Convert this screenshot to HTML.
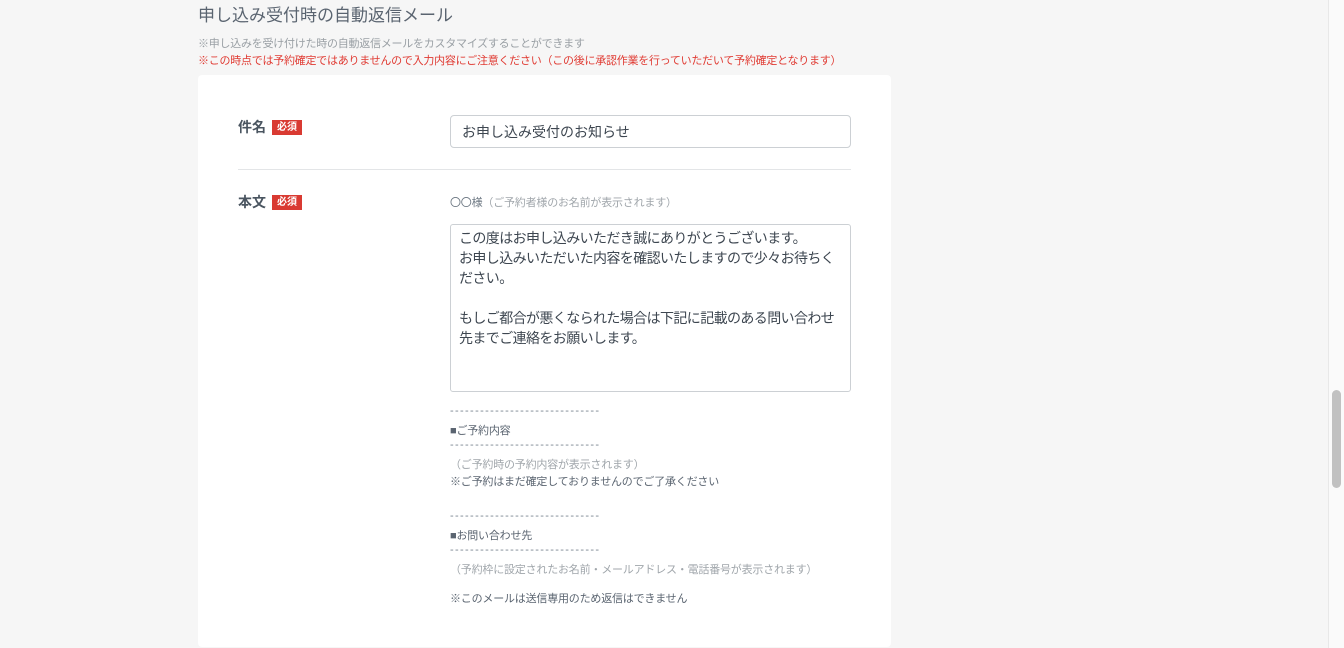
<!DOCTYPE html>
<html><head><meta charset="utf-8"><style>
*{margin:0;padding:0;box-sizing:border-box}
body{width:1344px;height:648px;background:#f6f6f6;font-family:"Liberation Sans","Noto Sans CJK JP",sans-serif;position:relative;overflow:hidden;color:#4a5560}
.a{position:absolute;white-space:nowrap}
.card{position:absolute;left:198px;top:75px;width:693px;height:572px;background:#fff;border-radius:4px}
.req{display:inline-block;background:#d93a32;color:#fff;font-size:10px;line-height:15px;padding:0 5px;margin-left:6px;vertical-align:2px;font-weight:bold}
.lbl{font-size:14px;font-weight:bold;color:#4a5560}
.s{font-size:11px;color:#5a6470;letter-spacing:-0.2px}
.d{letter-spacing:1.35px;color:#7a8590}
.g{color:#a0a6ab}
</style></head><body>
<div class="a" style="left:198px;top:1px;font-size:17px;color:#5a6470">申し込み受付時の自動返信メール</div>
<div class="a" style="left:198px;top:35px;font-size:11px;color:#9aa0a5;letter-spacing:-0.25px">※申し込みを受け付けた時の自動返信メールをカスタマイズすることができます</div>
<div class="a" style="left:198px;top:52px;font-size:11px;color:#e03a32;letter-spacing:-0.25px">※この時点では予約確定ではありませんので入力内容にご注意ください（この後に承認作業を行っていただいて予約確定となります）</div>
<div class="card"></div>
<div class="a lbl" style="left:238px;top:117px">件名<span class="req">必須</span></div>
<div class="a" style="left:450px;top:115px;width:401px;height:33px;border:1px solid #ccd0d4;border-radius:4px;padding:6px 11px;font-size:14px;color:#3d4650">お申し込み受付のお知らせ</div>
<div class="a" style="left:238px;top:169px;width:613px;height:1px;background:#e3e5e7"></div>
<div class="a lbl" style="left:238px;top:192px">本文<span class="req">必須</span></div>
<div class="a s" style="left:450px;top:194px"><span style="color:#6a7580">〇〇様</span><span class="g">（ご予約者様のお名前が表示されます）</span></div>
<div class="a" style="left:450px;top:224px;width:401px;height:168px;border:1px solid #ccd0d4;border-radius:3px;padding:3px 8px;font-size:14px;line-height:20px;color:#3d4650;letter-spacing:-0.6px;overflow:hidden">この度はお申し込みいただき誠にありがとうございます。<br>お申し込みいただいた内容を確認いたしますので少々お待ちく<br>ださい。<br><br>もしご都合が悪くなられた場合は下記に記載のある問い合わせ<br>先までご連絡をお願いします。</div>
<div class="a s d" style="left:450px;top:405px">------------------------------</div>
<div class="a s" style="left:450px;top:422px">■ご予約内容</div>
<div class="a s d" style="left:450px;top:439px">------------------------------</div>
<div class="a s g" style="left:450px;top:456px">（ご予約時の予約内容が表示されます）</div>
<div class="a s" style="left:450px;top:473px">※ご予約はまだ確定しておりませんのでご了承ください</div>
<div class="a s d" style="left:450px;top:510px">------------------------------</div>
<div class="a s" style="left:450px;top:527px">■お問い合わせ先</div>
<div class="a s d" style="left:450px;top:544px">------------------------------</div>
<div class="a s g" style="left:450px;top:561px">（予約枠に設定されたお名前・メールアドレス・電話番号が表示されます）</div>
<div class="a s" style="left:450px;top:590px">※このメールは送信専用のため返信はできません</div>
<div class="a" style="left:1328px;top:0;width:16px;height:648px;background:#fafafa;border-left:1px solid #e8e8e8"></div>
<div class="a" style="left:1332px;top:390px;width:9px;height:98px;background:#c1c1c1;border-radius:5px"></div>
</body></html>
